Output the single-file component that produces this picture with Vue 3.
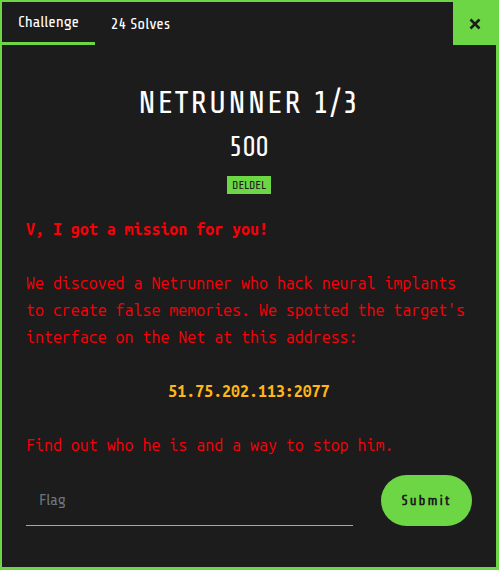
<script setup>
import { ref } from 'vue'

const tab = ref('challenge')
const flag = ref('')
</script>

<template>
  <main class="modal">
    <header class="bar">
      <nav class="tabs">
        <button type="button" class="tab" :class="{ active: tab === 'challenge' }" @click="tab = 'challenge'">Challenge</button>
        <button type="button" class="tab" :class="{ active: tab === 'solves' }" @click="tab = 'solves'">24 Solves</button>
      </nav>
      <button type="button" class="close" aria-label="Close">
        <svg viewBox="0 0 12 12" width="12" height="12" aria-hidden="true">
          <path d="M1.5 1.5L10.5 10.5M10.5 1.5L1.5 10.5" />
        </svg>
      </button>
    </header>

    <section class="body">
      <h1 class="name">NETRUNNER 1/3</h1>
      <h2 class="value">500</h2>
      <div class="tags"><span class="tag">DELDEL</span></div>

      <div class="description">
        <p><strong>V, I got a mission for you!</strong></p>
        <p>We discoved a Netrunner who hack neural implants to create false memories. We spotted the target's interface on the Net at this address:</p>
        <p class="address"><strong>51.75.202.113:2077</strong></p>
        <p>Find out who he is and a way to stop him.</p>
      </div>

      <form class="answer" @submit.prevent>
        <input v-model="flag" class="flag" type="text" placeholder="Flag" aria-label="Flag" />
        <button type="submit" class="submit">Submit</button>
      </form>
    </section>
  </main>
</template>

<style>
body {
  margin: 0;
  background: #1c1c1c;
}
</style>

<style scoped>
.modal {
  box-sizing: border-box;
  min-height: 100vh;
  border: solid #6cd645;
  border-width: 2px 3px 3px 2px;
  background: #1c1c1c;
  color: #fff;
  font-family: "Share Tech", "Liberation Sans Narrow", "Roboto Condensed", "Liberation Sans", sans-serif;
}
button,
input {
  margin: 0;
  padding: 0;
  border: 0;
  border-radius: 0;
  background: none;
  color: inherit;
  font: inherit;
}
button {
  cursor: pointer;
}
.bar {
  display: flex;
  justify-content: space-between;
  height: 43px;
}
.tabs {
  display: flex;
}
.tab {
  padding: 0 16px;
  font-size: 16px;
  line-height: 20px;
}
.tab.active {
  border-bottom: 3px solid #6cd645;
}
.close {
  display: flex;
  align-items: center;
  justify-content: center;
  width: 43px;
  background: #6cd645;
}
.close path {
  fill: none;
  stroke: #1c1c1c;
  stroke-width: 2.5;
}
.body {
  padding: 36px 24px 40px;
}
.name,
.value {
  margin: 0;
  font-weight: 400;
  text-align: center;
}
.name {
  font-size: 32px;
  line-height: 44px;
  letter-spacing: 2px;
}
.value {
  font-size: 28px;
  line-height: 44px;
}
.tags {
  display: flex;
  justify-content: center;
  margin-top: 7px;
}
.tag {
  padding: 0 5px;
  background: #6cd645;
  color: #1c1c1c;
  font-size: 12px;
  line-height: 18px;
}
.description {
  margin-top: 22px;
  color: #f80008;
  font-family: "Ubuntu Mono", "DejaVu Sans Mono", monospace;
  font-size: 16px;
  line-height: 27px;
}
.description p {
  margin: 0 0 27px;
}
.description p:last-child {
  margin-bottom: 0;
}
.description .address {
  color: #ffb619;
  text-align: center;
}
.answer {
  display: flex;
  gap: 28px;
  margin-top: 16px;
}
.flag {
  box-sizing: border-box;
  flex: 1;
  min-width: 0;
  height: 51px;
  padding: 0 13px;
  border-bottom: 1px solid #6cd645;
  font-size: 16px;
  outline: none;
}
.flag::placeholder {
  color: #6c757d;
  opacity: 1;
}
.submit {
  width: 91px;
  height: 51px;
  border-radius: 26px;
  background: #6cd645;
  color: #1c1c1c;
  font-size: 14px;
  font-weight: 700;
  letter-spacing: 2px;
}
</style>
